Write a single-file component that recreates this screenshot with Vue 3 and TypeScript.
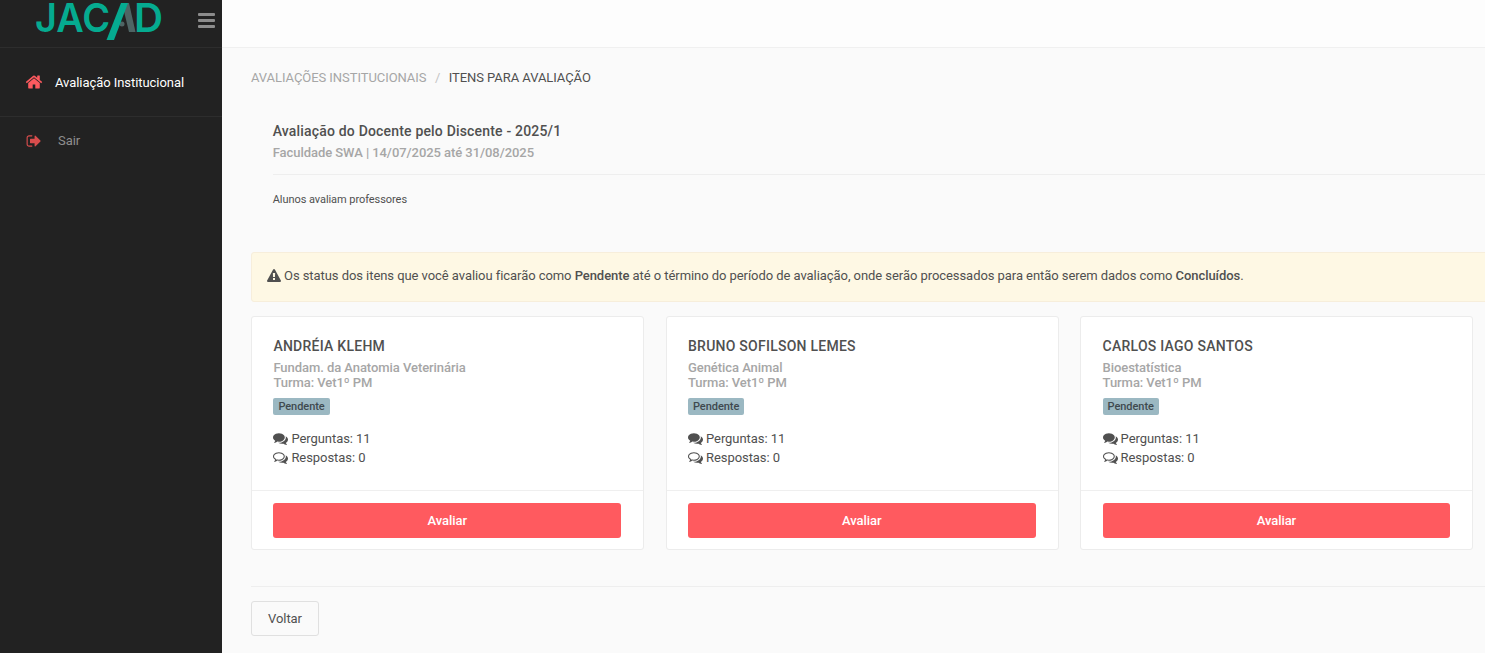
<script setup lang="ts">
interface Item { name: string; subject: string }
const items: Item[] = [
  { name: 'Andréia Klehm', subject: 'Fundam. da Anatomia Veterinária' },
  { name: 'Bruno Sofilson Lemes', subject: 'Genética Animal' },
  { name: 'Carlos Iago Santos', subject: 'Bioestatística' }
]
const icons = {
  home: 'M1472 992v480q0 26-19 45t-45 19h-384v-384h-256v384h-384q-26 0-45-19t-19-45v-480q0-1 .5-3t.5-3l575-474 575 474q1 2 1 6zm223-69l-62 74q-8 9-21 11h-3q-13 0-21-7l-692-577-692 577q-12 8-24 7-13-2-21-11l-62-74q-8-10-7-23.500t11-21.500l719-599q32-26 76-26t76 26l244 204v-195q0-14 9-23t23-9h192q14 0 23 9t9 23v408l219 182q10 8 11 21.500t-7 23.500z',
  signOut: 'M704 1440q0 4 1 20t.5 26.500-3 23.500-10 19.500-20.500 6.500h-320q-119 0-203.500-84.500t-84.500-203.500v-704q0-119 84.500-203.500t203.500-84.500h320q13 0 22.500 9.500t9.500 22.500q0 4 1 20t.5 26.500-3 23.500-10 19.500-20.500 6.500h-320q-66 0-113 47t-47 113v704q0 66 47 113t113 47h312l11.500 1 11.500 3 8 5.500 7 9 2 13.500zm928-544q0 26-19 45l-544 544q-19 19-45 19t-45-19-19-45v-288h-448q-26 0-45-19t-19-45v-384q0-26 19-45t45-19h448v-288q0-26 19-45t45-19 45 19l544 544q19 19 19 45z',
  warning: 'M1024 1375v-190q0-14-9.500-23.500t-22.500-9.500h-192q-13 0-22.500 9.500t-9.500 23.500v190q0 14 9.500 23.500t22.500 9.500h192q13 0 22.500-9.500t9.500-23.500zm-2-374l18-459q0-12-10-19-13-11-24-11h-220q-11 0-24 11-10 7-10 21l17 457q0 10 10 16.500t24 6.500h185q14 0 23.500-6.500t10.500-16.500zm-14-934l768 1408q35 63-2 126-17 29-46.500 46t-63.500 17h-1536q-34 0-63.500-17t-46.500-46q-37-63-2-126l768-1408q17-31 47-49t65-18 65 18 47 49z',
  comments: 'M1408 768q0 139-94 257t-256.500 186.500-353.500 68.500q-86 0-176-16-124 88-278 128-36 9-86 16h-3q-11 0-20.500-8t-11.500-21q-1-3-1-6.500t.5-6.500 2-6l2.500-5 3.500-5.500 4-5 4.500-5 4-4.500q5-6 23-25t26-29.500 22.500-29 25-38.500 20.500-44q-124-72-195-177t-71-224q0-139 94-257t256.500-186.500 353.500-68.500 353.500 68.500 256.500 186.500 94 257zm384 256q0 120-71 224.500t-195 176.500q10 24 20.500 44t25 38.500 22.500 29 26 29.500 23 25q1 1 4 4.500t4.500 5 4 5 3.500 5.500l2.500 5 2 6 .5 6.500-1 6.500q-3 14-13 22t-22 7q-50-7-86-16-154-40-278-128-90 16-176 16-271 0-472-132 58 4 88 4 161 0 309-45t264-129q125-92 192-212t67-254q0-77-23-152 129 71 204 178t75 230z',
  commentsO: 'M704 384q-153 0-286 52t-211.500 141-78.500 191q0 82 53 158t149 132l97 56-35 84q34-20 62-39l44-31 53 10q78 14 153 14 153 0 286-52t211.500-141 78.500-191-78.500-191-211.500-141-286-52zm0-128q191 0 353.500 68.500t256.500 186.500 94 257-94 257-256.500 186.500-353.500 68.500q-86 0-176-16-124 88-278 128-36 9-86 16h-3q-11 0-20.500-8t-11.500-21q-1-3-1-6.500t.5-6.500 2-6l2.500-5 3.500-5.500 4-5 4.500-5 4-4.500q5-6 23-25t26-29.500 22.500-29 25-38.500 20.500-44q-124-72-195-177t-71-224q0-139 94-257t256.500-186.500 353.500-68.500zm822 1169q10 24 20.500 44t25 38.500 22.500 29 26 29.500 23 25q1 1 4 4.500t4.500 5 4 5 3.500 5.500l2.500 5 2 6 .5 6.500-1 6.500q-3 14-13 22t-22 7q-50-7-86-16-154-40-278-128-90 16-176 16-271 0-472-132 58 4 88 4 161 0 309-45t264-129q125-92 192-212t67-254q0-77-23-152 129 71 204 178t75 230q0 120-71 224.500t-195 176.500z'
}
</script>

<template>
  <div class="shell">
    <aside class="sidebar">
      <div class="brand">
        <svg class="logo" width="134" height="47" viewBox="0 0 134 47">
          <text x="-1" y="32" class="logo-text" textLength="75" lengthAdjust="spacingAndGlyphs">JAC</text>
          <path d="M86 3h7l6.500 29h-6.500z" fill="#4f6464" />
          <circle cx="86" cy="24" r="2.500" fill="#4f6464" />
          <path d="M85 3h7L78 40h-7.500z" fill="#05ab90" />
          <text x="98" y="32" class="logo-text" textLength="29" lengthAdjust="spacingAndGlyphs">D</text>
        </svg>
        <div class="burger"><span></span><span></span><span></span></div>
      </div>
      <a class="nav-item active">
        <svg class="nav-home" viewBox="0 0 1792 1792"><path :d="icons.home" /></svg>
        <span>Avaliação Institucional</span>
      </a>
      <a class="nav-item exit">
        <svg class="nav-exit" viewBox="0 0 1792 1792"><path :d="icons.signOut" /></svg>
        <span>Sair</span>
      </a>
    </aside>

    <main class="main">
      <header class="topbar"></header>
      <div class="content">
        <nav class="crumbs">
          <span class="crumb-link">Avaliações Institucionais</span>
          <span class="crumb-sep">/</span>
          <span class="crumb-current">Itens para avaliação</span>
        </nav>

        <section class="intro">
          <h1>Avaliação do Docente pelo Discente - 2025/1</h1>
          <p class="intro-sub">Faculdade SWA | 14/07/2025 até 31/08/2025</p>
          <hr />
          <p class="intro-note">Alunos avaliam professores</p>
        </section>

        <div class="alert">
          <svg class="alert-icon" viewBox="0 0 1792 1792"><path :d="icons.warning" /></svg>
          <span>Os status dos itens que você avaliou ficarão como <b>Pendente</b> até o término do período de avaliação, onde serão processados para então serem dados como <b>Concluídos</b>.</span>
        </div>

        <div class="cards">
          <article v-for="item in items" :key="item.name" class="card">
            <div class="card-body">
              <h2>{{ item.name }}</h2>
              <p class="meta">{{ item.subject }}</p>
              <p class="meta">Turma: Vet1º PM</p>
              <span class="badge">Pendente</span>
              <div class="stat stat-first">
                <svg viewBox="0 0 1792 1792"><path :d="icons.comments" /></svg>
                <span>Perguntas: 11</span>
              </div>
              <div class="stat">
                <svg viewBox="0 0 1792 1792"><path :d="icons.commentsO" /></svg>
                <span>Respostas: 0</span>
              </div>
            </div>
            <div class="card-foot">
              <button class="btn-primary" type="button">Avaliar</button>
            </div>
          </article>
        </div>

        <hr class="foot-rule" />
        <button class="btn-back" type="button">Voltar</button>
      </div>
    </main>
  </div>
</template>

<style>
html, body { margin: 0; padding: 0; overflow: hidden; }
</style>

<style scoped>
.shell {
  display: flex;
  height: 653px;
  overflow: hidden;
  font-family: Roboto, "Liberation Sans", sans-serif;
  font-size: 13px;
  letter-spacing: -0.06px;
  color: #505050;
  background: #fafafa;
}
.sidebar {
  flex: 0 0 222px;
  background: #222222;
  display: flex;
  flex-direction: column;
}
.brand {
  height: 47px;
  border-bottom: 1px solid #2d2d2d;
  display: flex;
  align-items: flex-start;
  padding-left: 36px;
}
.logo { flex: none; overflow: visible; }
.logo-text {
  font-family: Inter, Roboto, sans-serif;
  font-size: 40px;
  font-weight: 600;
  fill: #05ab90;
}
.burger {
  margin: 13px 0 0 28px;
  width: 17px;
  display: flex;
  flex-direction: column;
  gap: 3px;
}
.burger span {
  height: 3px;
  border-radius: 1px;
  background: #8c8c8c;
}
.nav-item {
  display: flex;
  align-items: center;
  box-sizing: border-box;
}
.nav-item.active {
  height: 69px;
  padding-left: 25px;
  color: #fff;
  border-bottom: 1px solid #2d2d2d;
}
.nav-item.exit {
  height: 47px;
  padding-left: 26px;
  color: #8f8f8f;
}
.nav-home { width: 18px; height: 18px; fill: #ff5a5f; margin-right: 12px; }
.nav-exit { width: 16px; height: 16px; fill: #d94d4d; margin-right: 16px; }

.main { flex: 1; min-width: 0; display: flex; flex-direction: column; }
.topbar { height: 47px; flex: none; background: #fdfdfd; border-bottom: 1px solid #f0f0f0; }
.content { padding-left: 29px; }
.crumbs {
  height: 18px;
  margin-top: 21px;
  display: flex;
  align-items: center;
  line-height: 18px;
  text-transform: uppercase;
  white-space: nowrap;
}
.crumb-link { color: #a6a6a6; }
.crumb-sep { color: #c4c4c4; margin: 0 8.5px; text-transform: none; }
.crumb-current { color: #505050; }

.intro { padding-left: 21.7px; margin-top: 34px; }
.intro h1 {
  margin: 0;
  font-size: 14px;
  line-height: 20px;
  font-weight: 500;
  letter-spacing: 0.18px;
  color: #505050;
}
.intro-sub {
  margin: 2px 0 0;
  line-height: 20px;
  font-weight: 500;
  color: #a6a6a6;
}
.intro hr { border: 0; border-top: 1px solid #eeeeee; margin: 11px 0 0; }
.intro-note {
  margin: 17px 0 0;
  font-size: 11px;
  line-height: 16px;
  color: #505050;
}

.alert {
  margin: 44px -10px 0 0;
  height: 50px;
  box-sizing: border-box;
  padding: 0 0 3px 15px;
  display: flex;
  align-items: center;
  background: #fef8e4;
  border: 1px solid #f7eedb;
  border-radius: 3px;
  white-space: nowrap;
}
.alert-icon { width: 14px; height: 14px; fill: #505050; margin-right: 3px; flex: none; }
.alert b { font-weight: 500; }

.cards {
  margin: 14px 11.8px 0 0;
  display: grid;
  grid-template-columns: repeat(3, 1fr);
  gap: 21.6px;
}
.card {
  height: 234px;
  box-sizing: border-box;
  background: #fff;
  border: 1px solid #ececec;
  border-radius: 3px;
  display: flex;
  flex-direction: column;
}
.card-body { flex: 1; padding: 19px 22px 0 21.4px; }
.card h2 {
  margin: 0 0 4px;
  font-size: 14px;
  line-height: 20px;
  font-weight: 500;
  letter-spacing: 0.25px;
  text-transform: uppercase;
  color: #505050;
}
.meta {
  margin: 0;
  line-height: 15px;
  font-weight: 500;
  color: #a6a6a6;
}
.badge {
  display: block;
  width: fit-content;
  margin-top: 8px;
  height: 17px;
  line-height: 17px;
  padding: 0 5px;
  font-size: 11px;
  font-weight: 500;
  color: #3f4a4f;
  background: #9bb8c2;
  border-radius: 2px;
}
.stat {
  display: flex;
  align-items: center;
  height: 19px;
  line-height: 19px;
}
.stat-first { margin-top: 14px; }
.stat svg { width: 15px; height: 15px; fill: #505050; margin-right: 3px; flex: none; }
.card-foot {
  height: 59px;
  box-sizing: border-box;
  border-top: 1px solid #efefef;
  padding: 12px 22px 0 21.4px;
}
.btn-primary {
  display: block;
  width: 100%;
  height: 35px;
  border: 0;
  border-radius: 3px;
  background: #ff5a5f;
  color: #fff;
  font: 500 13px Roboto, sans-serif;
  letter-spacing: -0.06px;
}
.foot-rule { border: 0; border-top: 1px solid #eeeeee; margin: 36px 0 14px; }
.btn-back {
  display: block;
  width: 68px;
  height: 35px;
  background: #fafafa;
  border: 1px solid #e0e0e0;
  border-radius: 3px;
  color: #505050;
  font: 400 13px Roboto, sans-serif;
  letter-spacing: -0.06px;
}
</style>
